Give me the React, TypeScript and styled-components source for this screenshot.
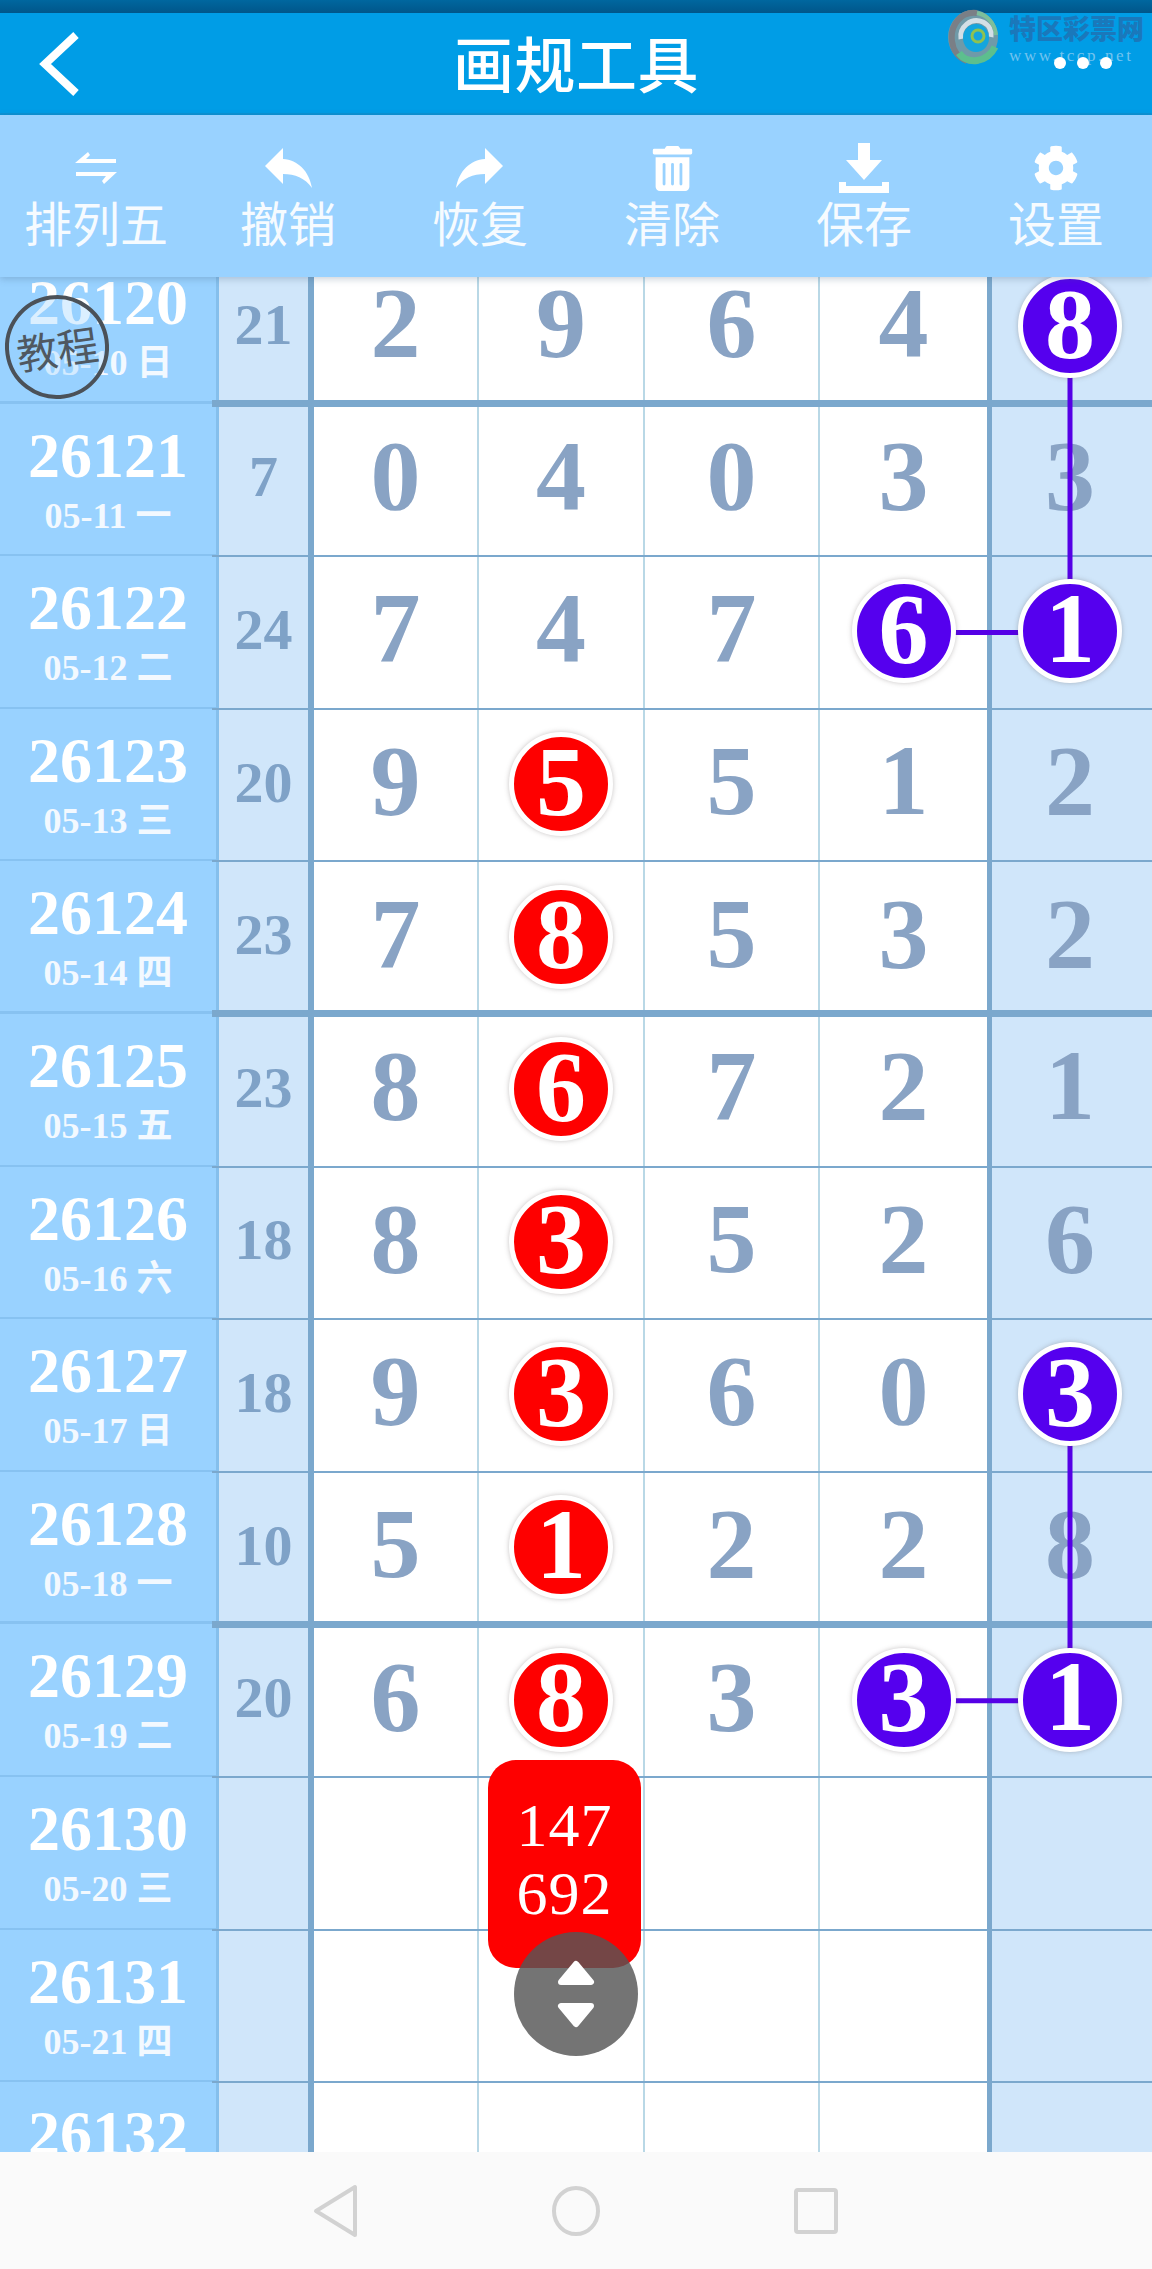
import React from "react";
import styled, { createGlobalStyle } from "styled-components";
import { FaCog, FaTrashAlt } from "react-icons/fa";

const ROW_H = 152.6;
const SCROLL_TOP = 26;

const GlobalStyle = createGlobalStyle`
  html, body { margin: 0; padding: 0; background: #fff; }
  * { box-sizing: border-box; }
`;

const Page = styled.div`
  position: relative;
  width: 1152px;
  height: 2269px;
  display: flex;
  flex-direction: column;
  overflow: hidden;
  font-family: "Liberation Serif", "Noto Sans CJK SC", serif;
`;

const StatusBar = styled.div`
  height: 13px;
  background: linear-gradient(#00679f, #00568a);
`;

const Header = styled.header`
  position: relative;
  height: 102px;
  background: #009de6;
  border-bottom: 2px solid #0a92d6;
  display: flex;
  align-items: center;
  justify-content: center;
`;

const Title = styled.h1`
  margin: 0 0 4px;
  color: #fff;
  font: 500 61px/1 "Noto Sans CJK SC", sans-serif;
  letter-spacing: 0.5px;
`;

const Back = styled.svg`
  position: absolute;
  left: 38px;
  top: 17px;
`;

const Watermark = styled.div`
  position: absolute;
  right: 8px;
  top: -4px;
  display: flex;
  align-items: flex-start;
  gap: 10px;
`;

const MarkName = styled.div`
  color: #1a78bb;
  font: 900 27px/1 "Noto Sans CJK SC", sans-serif;
  margin-top: 5px;
  white-space: nowrap;
`;

const MarkUrl = styled.div`
  color: #72c3ee;
  font: 400 17px/1 "Liberation Serif", serif;
  letter-spacing: 2.6px;
  margin-top: 6px;
  white-space: nowrap;
`;

const Dots = styled.div`
  position: absolute;
  left: 1054px;
  top: 44px;
  display: flex;
  gap: 11px;
`;

const Dot = styled.span`
  width: 12px;
  height: 12px;
  border-radius: 50%;
  background: #fff;
`;

const Toolbar = styled.nav`
  position: relative;
  z-index: 5;
  height: 162px;
  padding-top: 28px;
  background: #99d2ff;
  box-shadow: 0 2px 7px rgba(60, 90, 120, 0.28);
  display: grid;
  grid-template-columns: repeat(6, 1fr);
`;

const Tool = styled.div`
  display: flex;
  flex-direction: column;
  align-items: center;
  color: #fff;
`;

const ToolIcon = styled.div`
  height: 50px;
  display: flex;
  align-items: center;
  justify-content: center;
`;

const ToolLabel = styled.div`
  margin-top: -1px;
  color: #f6fbff;
  font: 400 48px/58px "Noto Sans CJK SC", sans-serif;
  white-space: nowrap;
`;

const Chart = styled.main`
  flex: 1;
  overflow: hidden;
  background: #fff;
`;

const ChartInner = styled.div`
  position: relative;
  margin-top: -${SCROLL_TOP}px;
`;

const Row = styled.div<{ $thick: boolean }>`
  position: relative;
  height: ${ROW_H}px;
  display: grid;
  grid-template-columns: 219px 95px 165px 166px 175px 172px 160px;

  &::after {
    content: "";
    position: absolute;
    z-index: 1;
    left: 212px;
    right: 0;
    bottom: ${(p) => (p.$thick ? -3.5 : -1)}px;
    height: ${(p) => (p.$thick ? 7 : 2)}px;
    background: #7ba8cd;
  }
`;

const IssueCell = styled.div<{ $thick: boolean }>`
  background: #99d2ff;
  border-right: 3px solid #85bfec;
  box-shadow: inset 0 ${(p) => (p.$thick ? -3 : -2)}px 0 #87c2f1;
  color: #fff;
  text-align: center;
  overflow: hidden;
`;

const IssueNo = styled.div`
  font: 700 64px/64px "Liberation Serif", serif;
  margin-top: 20px;
`;

const IssueDate = styled.div`
  font: 700 36px/44px "Liberation Serif", "Noto Sans CJK SC", serif;
  margin-top: 6px;
  color: #f3f9ff;
`;

const SumCell = styled.div`
  background: #d0e6fa;
  border-right: 6px solid #7ba8cd;
  color: #7fa2c7;
  font: 700 58px/1 "Liberation Serif", serif;
  display: flex;
  align-items: center;
  justify-content: center;
  padding-bottom: 5px;
`;

const NumCell = styled.div<{ $tinted?: boolean; $heavy?: boolean }>`
  background: ${(p) => (p.$tinted ? "#d0e6fa" : "#fff")};
  border-right: ${(p) => (p.$heavy ? "5px solid #7ba8cd" : p.$tinted ? "none" : "2px solid #b9d8e6")};
  padding-right: ${(p) => (p.$tinted ? 4 : 0)}px;
  padding-bottom: 8px;
  color: #89a3c4;
  font: 700 100px/1 "Liberation Serif", serif;
  display: flex;
  align-items: center;
  justify-content: center;
`;

const Ball = styled.span<{ $purple?: boolean }>`
  position: relative;
  z-index: 2;
  width: 104px;
  height: 104px;
  margin-top: 6px;
  border-radius: 50%;
  border: 5px solid #fff;
  background: ${(p) => (p.$purple ? "#5500ee" : "#fe0000")};
  box-shadow: 0 0 5px rgba(90, 80, 80, 0.35);
  color: #fff;
  display: flex;
  align-items: center;
  justify-content: center;
  padding-bottom: 5px;
`;

const Links = styled.svg`
  position: absolute;
  left: 0;
  top: 0;
  z-index: 1;
`;

const Badge = styled.div`
  position: absolute;
  left: 5px;
  top: 295px;
  z-index: 4;
  width: 104px;
  height: 104px;
  border-radius: 50%;
  border: 4px solid #4b5158;
  background: rgba(153, 210, 255, 0.35);
  color: #4f5861;
  font: 400 41px/1 "Noto Sans CJK SC", sans-serif;
  display: flex;
  align-items: center;
  justify-content: center;
  transform: rotate(-8deg);
`;

const Pill = styled.div`
  position: absolute;
  left: 488px;
  top: 1760px;
  z-index: 6;
  width: 153px;
  height: 208px;
  padding-top: 31px;
  border-radius: 28px;
  background: #fe0000;
  color: #fff;
  font: 400 62px/68px "Liberation Serif", serif;
  letter-spacing: 1px;
  text-align: center;
`;

const Stepper = styled.div`
  position: absolute;
  left: 514px;
  top: 1932px;
  z-index: 7;
  width: 124px;
  height: 124px;
  border-radius: 50%;
  background: rgba(85, 85, 85, 0.82);
  display: flex;
  align-items: center;
  justify-content: center;
`;

const SystemNav = styled.footer`
  position: relative;
  z-index: 5;
  height: 117px;
  background: #fafafa;
  display: grid;
  grid-template-columns: 216px 240px 240px 240px 216px;
  align-items: center;
  justify-items: center;
`;

type Mark = "r" | "p" | undefined;
type Cell = { d: number; m?: Mark };

const n = (d: number, m?: Mark): Cell => ({ d, m });

const rows: { no: string; date: string; sum?: number; cells?: Cell[] }[] = [
  { no: "26120", date: "05-10 日", sum: 21, cells: [n(2), n(9), n(6), n(4), n(8, "p")] },
  { no: "26121", date: "05-11 一", sum: 7, cells: [n(0), n(4), n(0), n(3), n(3)] },
  { no: "26122", date: "05-12 二", sum: 24, cells: [n(7), n(4), n(7), n(6, "p"), n(1, "p")] },
  { no: "26123", date: "05-13 三", sum: 20, cells: [n(9), n(5, "r"), n(5), n(1), n(2)] },
  { no: "26124", date: "05-14 四", sum: 23, cells: [n(7), n(8, "r"), n(5), n(3), n(2)] },
  { no: "26125", date: "05-15 五", sum: 23, cells: [n(8), n(6, "r"), n(7), n(2), n(1)] },
  { no: "26126", date: "05-16 六", sum: 18, cells: [n(8), n(3, "r"), n(5), n(2), n(6)] },
  { no: "26127", date: "05-17 日", sum: 18, cells: [n(9), n(3, "r"), n(6), n(0), n(3, "p")] },
  { no: "26128", date: "05-18 一", sum: 10, cells: [n(5), n(1, "r"), n(2), n(2), n(8)] },
  { no: "26129", date: "05-19 二", sum: 20, cells: [n(6), n(8, "r"), n(3), n(3, "p"), n(1, "p")] },
  { no: "26130", date: "05-20 三" },
  { no: "26131", date: "05-21 四" },
  { no: "26132", date: "05-22 五" },
];

const tools: { label: string; icon: React.ReactNode }[] = [
  {
    label: "排列五",
    icon: (
      <svg width="42" height="32" viewBox="0 0 42 32" fill="#fff">
        <path d="M0 11 L13 0 L15 3 L11 7 H41 V11 Z" />
        <path d="M1 20 H42 L29 32 L27 29 L31 24 H1 Z" />
      </svg>
    ),
  },
  {
    label: "撤销",
    icon: (
      <svg width="48" height="40" viewBox="0 0 48 40" fill="#fff">
        <path d="M1 18 L19 0 V11 C34 12 45 23 48 40 C41 30 31 26 19 26 V36 Z" />
      </svg>
    ),
  },
  {
    label: "恢复",
    icon: (
      <svg width="48" height="40" viewBox="0 0 48 40" fill="#fff">
        <path d="M47 18 L29 0 V11 C14 12 3 23 0 40 C7 30 17 26 29 26 V36 Z" />
      </svg>
    ),
  },
  { label: "清除", icon: <FaTrashAlt size={45} color="#fff" /> },
  {
    label: "保存",
    icon: (
      <svg width="50" height="50" viewBox="0 0 50 50" fill="#fff">
        <path d="M19 0 H31 V17 H43 L25 37 L7 17 H19 Z" />
        <path d="M0 39 H7 V43 H43 V39 H50 V50 H0 Z" />
      </svg>
    ),
  },
  { label: "设置", icon: <FaCog size={46} color="#fff" /> },
];

const ballCenter = (rowIndex: number, col: 4 | 5) => ({
  x: col === 4 ? 903 : 1070,
  y: (rowIndex + 0.5) * ROW_H,
});

const links: [number, 4 | 5, number, 4 | 5][] = [
  [0, 5, 2, 5],
  [2, 4, 2, 5],
  [7, 5, 9, 5],
  [9, 4, 9, 5],
];

function Swirl() {
  return (
    <svg width="52" height="56" viewBox="0 0 52 56" fill="none">
      <ellipse cx="26" cy="28" rx="25" ry="27" fill="#6f9aa8" />
      <path d="M30 4 C14 2 3 16 5 32 C6 42 12 49 20 52" stroke="#7a7f86" strokeWidth="6" />
      <path d="M12 44 C20 56 40 54 48 38" stroke="#5cbf8e" strokeWidth="7" />
      <path d="M30 4 C40 6 48 14 49 26" stroke="#7dbf9a" strokeWidth="4" />
      <path d="M14 30 C12 18 24 8 36 13 C42 16 45 22 44 28" stroke="#d3dfe6" strokeWidth="5" />
      <ellipse cx="29" cy="29" rx="13" ry="14" fill="#14a5de" />
      <circle cx="31" cy="27" r="6" stroke="#8fc24f" strokeWidth="3" />
    </svg>
  );
}

export default function App() {
  return (
    <Page>
      <GlobalStyle />
      <StatusBar />
      <Header>
        <Back width="44" height="68" viewBox="0 0 44 68" fill="none">
          <path d="M38 5 L7 34 L38 63" stroke="#fff" strokeWidth="8" />
        </Back>
        <Title>画规工具</Title>
        <Watermark>
          <Swirl />
          <div>
            <MarkName>特区彩票网</MarkName>
            <MarkUrl>www.tccp.net</MarkUrl>
          </div>
        </Watermark>
        <Dots>
          <Dot />
          <Dot />
          <Dot />
        </Dots>
      </Header>
      <Toolbar>
        {tools.map((t) => (
          <Tool key={t.label}>
            <ToolIcon>{t.icon}</ToolIcon>
            <ToolLabel>{t.label}</ToolLabel>
          </Tool>
        ))}
      </Toolbar>
      <Chart>
        <ChartInner>
          {rows.map((row, i) => {
            // every fourth row closes with a heavy rule
            const thick = i % 4 === 0;
            return (
              <Row key={row.no} $thick={thick}>
                <IssueCell $thick={thick}>
                  <IssueNo>{row.no}</IssueNo>
                  <IssueDate>{row.date}</IssueDate>
                </IssueCell>
                <SumCell>{row.sum}</SumCell>
                {[0, 1, 2, 3, 4].map((c) => {
                  const cell = row.cells?.[c];
                  return (
                    <NumCell key={c} $tinted={c === 4} $heavy={c === 3}>
                      {cell?.m ? <Ball $purple={cell.m === "p"}>{cell.d}</Ball> : cell?.d}
                    </NumCell>
                  );
                })}
              </Row>
            );
          })}
          <Links width="1152" height={ROW_H * rows.length}>
            {links.map(([r1, c1, r2, c2]) => {
              const a = ballCenter(r1, c1);
              const b = ballCenter(r2, c2);
              return (
                <line key={`${r1}-${c1}-${r2}-${c2}`} x1={a.x} y1={a.y} x2={b.x} y2={b.y} stroke="#5500e6" strokeWidth="5" />
              );
            })}
          </Links>
        </ChartInner>
      </Chart>
      <SystemNav>
        <span />
        <svg width="46" height="54" viewBox="0 0 46 54" fill="none" stroke="#d2d2d2" strokeWidth="4" strokeLinejoin="round">
          <path d="M3 27 L42 3 V51 Z" />
        </svg>
        <svg width="50" height="54" viewBox="0 0 50 54" fill="none" stroke="#d2d2d2" strokeWidth="4">
          <ellipse cx="25" cy="27" rx="22" ry="23" />
        </svg>
        <svg width="46" height="48" viewBox="0 0 46 48" fill="none" stroke="#d2d2d2" strokeWidth="4" strokeLinejoin="round">
          <rect x="3" y="3" width="40" height="42" rx="2" />
        </svg>
      </SystemNav>
      <Badge>教程</Badge>
      <Pill>
        147
        <br />
        692
      </Pill>
      <Stepper>
        <svg width="38" height="68" viewBox="0 0 38 68" fill="#fff" stroke="#fff" strokeWidth="6" strokeLinejoin="round">
          <path d="M19 4 L34 22 H4 Z" />
          <path d="M4 46 H34 L19 64 Z" />
        </svg>
      </Stepper>
    </Page>
  );
}
